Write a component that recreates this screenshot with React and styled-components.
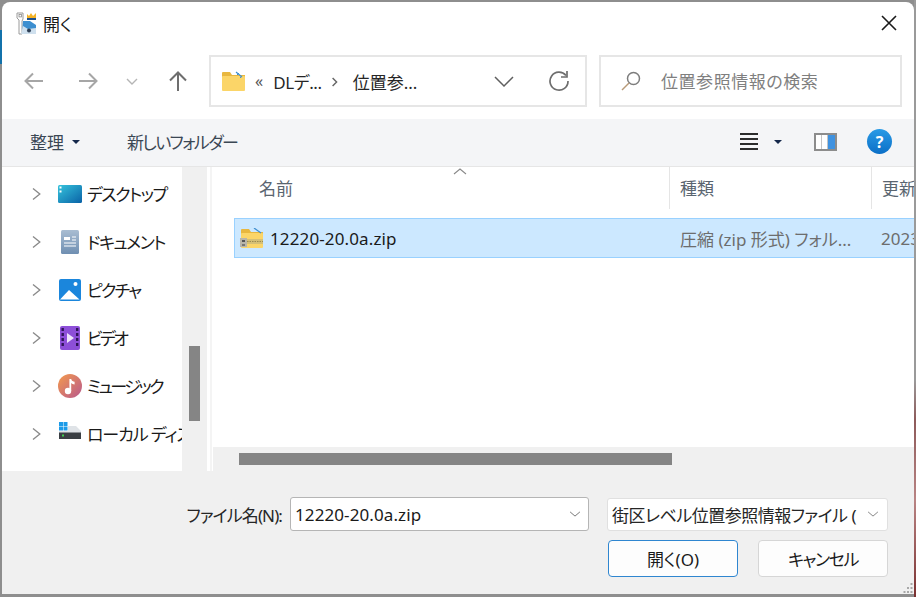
import React from "react";
import styled, { createGlobalStyle } from "styled-components";

const GlobalStyle = createGlobalStyle`
  html, body {
    margin: 0;
    padding: 0;
    width: 916px;
    height: 597px;
    overflow: hidden;
  }
  body {
    font-family: "Noto Sans", "Noto Sans CJK JP", sans-serif;
    font-feature-settings: "palt";
    font-size: 17px;
  }
  * { box-sizing: border-box; }
  svg { flex: none; }
`;

const navItems = [
  { name: "デスクトップ", icon: <DesktopIcon />, squeeze: 1.5 },
  { name: "ドキュメント", icon: <DocumentIcon />, squeeze: 1.5 },
  { name: "ピクチャ", icon: <PictureIcon />, squeeze: 1.75 },
  { name: "ビデオ", icon: <VideoIcon />, squeeze: 2.6 },
  { name: "ミュージック", icon: <MusicIcon />, squeeze: 2.5 },
  { name: "ローカル ディスク (C:)", icon: <DriveIcon />, squeeze: 1.1 },
];

function Line({ d, color = "#8a8a8a", width = 2, size = 20 }) {
  return (
    <svg width={size} height={size} viewBox="0 0 20 20" fill="none" stroke={color} strokeWidth={width}>
      <path d={d} />
    </svg>
  );
}

function DesktopIcon() {
  return (
    <svg width="24" height="18" viewBox="0 0 24 18">
      <defs>
        <linearGradient id="desk" x1="0" y1="0" x2="1" y2="1">
          <stop offset="0" stopColor="#35c3dc" />
          <stop offset="1" stopColor="#0a62a6" />
        </linearGradient>
      </defs>
      <rect width="24" height="18" rx="1.5" fill="url(#desk)" />
      <rect x="1.5" y="1.5" width="2" height="2" fill="#fff" />
      <rect x="1.5" y="5.5" width="2" height="2" fill="#fff" />
    </svg>
  );
}

function DocumentIcon() {
  return (
    <svg width="18" height="24" viewBox="0 0 18 24">
      <defs>
        <linearGradient id="doc" x1="0" y1="0" x2="0" y2="1">
          <stop offset="0" stopColor="#a9bdd2" />
          <stop offset="1" stopColor="#6f8fb2" />
        </linearGradient>
      </defs>
      <rect width="18" height="24" rx="1.5" fill="url(#doc)" />
      <path d="M3 7h6v3H3z" fill="#fff" />
      <path d="M11 7h4M11 10h4M3 13h12M3 16h12" stroke="#fff" strokeWidth="1.2" />
    </svg>
  );
}

function PictureIcon() {
  return (
    <svg width="22" height="22" viewBox="0 0 22 22">
      <rect width="22" height="22" rx="2" fill="#1b86dc" />
      <circle cx="16.5" cy="5" r="2" fill="#fff" />
      <path d="M1 20.5 10 11l10.5 9.5z" fill="#fff" />
    </svg>
  );
}

function VideoIcon() {
  return (
    <svg width="20" height="24" viewBox="0 0 20 24">
      <rect width="20" height="24" rx="2" fill="#8d4fd8" />
      <g fill="#2f1458">
        <rect x="1.5" y="2" width="2.4" height="3" />
        <rect x="1.5" y="7" width="2.4" height="3" />
        <rect x="1.5" y="12" width="2.4" height="3" />
        <rect x="1.5" y="17" width="2.4" height="3" />
        <rect x="16" y="2" width="2.4" height="3" />
        <rect x="16" y="7" width="2.4" height="3" />
        <rect x="16" y="12" width="2.4" height="3" />
        <rect x="16" y="17" width="2.4" height="3" />
      </g>
      <path d="M7 7l7 5-7 5z" fill="#eee4fb" />
    </svg>
  );
}

function MusicIcon() {
  return (
    <svg width="24" height="24" viewBox="0 0 24 24">
      <defs>
        <linearGradient id="music" x1="0" y1="0" x2="1" y2="1">
          <stop offset="0" stopColor="#f49a4c" />
          <stop offset="1" stopColor="#b8598e" />
        </linearGradient>
      </defs>
      <circle cx="12" cy="12" r="12" fill="url(#music)" />
      <circle cx="10" cy="17" r="3.2" fill="#fff" />
      <path d="M11.4 17V5h1.8c.3 2 2 2.6 3.4 2.8v2.6c-1.5 0-2.7-.5-3.4-1.3V17z" fill="#fff" />
    </svg>
  );
}

function DriveIcon() {
  return (
    <svg width="24" height="24" viewBox="0 0 24 24">
      <g fill="#1c9be8">
        <rect x="1" y="0" width="4" height="4" />
        <rect x="5.5" y="0" width="4" height="4" />
        <rect x="1" y="4.5" width="4" height="4" />
        <rect x="5.5" y="4.5" width="4" height="4" />
      </g>
      <path d="M10 4h8l5 5v2H1V9h9z" fill="#dfe3e7" />
      <rect x="1" y="10.5" width="22" height="6.5" fill="#3a3f44" />
      <rect x="4" y="12.5" width="2" height="2" fill="#3fd04f" />
    </svg>
  );
}

function FolderIcon() {
  return (
    <svg width="23" height="20" viewBox="0 0 23 20">
      <path d="M0 2a1 1 0 0 1 1-1h7l2 3h13v3H0z" fill="#e8b73f" />
      <rect x="0" y="5" width="23" height="15" rx="1" fill="#fbd568" />
      <path d="M14 1l6 5" stroke="#3f8fcf" strokeWidth="1.2" />
      <path d="M15 4l2-2M18 7l2-2" stroke="#3f8fcf" strokeWidth="1" />
    </svg>
  );
}

function ZipIcon() {
  return (
    <svg width="24" height="20" viewBox="0 0 24 20">
      <path d="M1 2a1 1 0 0 1 1-1h7l2 3h12v3H1z" fill="#e8b73f" />
      <rect x="1" y="5" width="22" height="15" rx="1" fill="#fbd568" />
      <path d="M14 0l7 5" stroke="#3f8fcf" strokeWidth="1.2" />
      <rect x="6" y="11" width="17" height="5" fill="#d6c074" />
      <path d="M7 13.5h16" stroke="#9a8a50" strokeWidth="1" strokeDasharray="1.5 1" />
      <rect x="0" y="10" width="7" height="9" fill="#b9b5a8" />
      <rect x="2" y="12" width="3" height="2" fill="#555" />
      <rect x="2" y="16" width="3" height="2" fill="#777" />
    </svg>
  );
}

function AppIcon() {
  return (
    <svg width="24" height="24" viewBox="0 0 24 24">
      <path d="M3 1h6v6l-1 2v13H5V8L3 6z" fill="#fff" stroke="#9a9a9a" strokeWidth="1" />
      <rect x="5" y="2.5" width="2.4" height="2.4" fill="none" stroke="#8a8a8a" strokeWidth=".8" />
      <path d="M9 9l7 0 6 4v9H8z" fill="#3d8fd0" />
      <path d="M7 22l2-8 5 3 8-1v6z" fill="#cfe0ee" />
      <circle cx="15" cy="18.5" r="2" fill="#2d3f55" />
      <path d="M13 2l2 2 2-3 2 3 3-3v6h-9z" fill="#f4b226" />
      <path d="M13 6h9v2h-9z" fill="#1d4f8c" />
    </svg>
  );
}

export default function App() {
  return (
    <Page>
      <GlobalStyle />
      <Dialog>
        <TitleBar>
          <TitleLeft>
            <AppIcon />
            <TitleText>開く</TitleText>
          </TitleLeft>
          <CloseIcon>
            <Line d="M3 3l14 14M17 3 3 17" color="#1a1a1a" width={1.6} />
          </CloseIcon>
        </TitleBar>

        <NavBar>
          <NavButtons>
            <NavButton $w={54}><Line d="M19 10H1.5M9 2.5 1.5 10 9 17.5" color="#a6a6a6" /></NavButton>
            <NavButton $w={44}><Line d="M1 10h17.5M11 2.5l7.5 7.5-7.5 7.5" color="#a6a6a6" /></NavButton>
            <NavButton $w={46}><Line d="M5 8l5 5 5-5" color="#b5b5b5" width={1.4} /></NavButton>
            <NavButton $w={40}><Line d="M10 20V1.5M2 9.5l8-8 8 8" color="#6e6e6e" /></NavButton>
          </NavButtons>
          <AddressBox>
            <FolderIcon />
            <Crumbs>
              <CrumbSmall>«</CrumbSmall>
              <Crumb $squeeze>DLデ...</Crumb>
              <CrumbSep><Line d="M7 5l5 5-5 5" color="#666" width={1.8} size={16} /></CrumbSep>
              <Crumb>位置参...</Crumb>
            </Crumbs>
            <AddressTools>
              <Line d="M1 6l9 9 9-9" color="#5f5f5f" width={1.5} />
              <svg width="22" height="22" viewBox="0 0 22 22" fill="none" stroke="#6e6e6e" strokeWidth="1.7">
                <path d="M18 5.5A9 9 0 1 0 20 11" />
                <path d="M19 1v6h-6" />
              </svg>
            </AddressTools>
          </AddressBox>
          <SearchBox>
            <svg width="20" height="20" viewBox="0 0 20 20" fill="none" strokeWidth="1.5">
              <circle cx="12.5" cy="7.5" r="6" stroke="#7d7d7d" />
              <path d="M8 12 1 19" stroke="#b89a78" />
            </svg>
            <SearchText>位置参照情報の検索</SearchText>
          </SearchBox>
        </NavBar>

        <Toolbar>
          <ToolLeft>
            <ToolButton>整理<Caret /></ToolButton>
            <ToolButton $squeeze>新しいフォルダー</ToolButton>
          </ToolLeft>
          <ToolRight>
            <ViewButton>
              <Burger><i /><i /><i /><i /></Burger>
              <Caret />
            </ViewButton>
            <PaneIcon><PaneStripe /><PaneStripe /><PaneFill /></PaneIcon>
            <HelpIcon>?</HelpIcon>
          </ToolRight>
        </Toolbar>

        <Main>
          <Sidebar>
            {navItems.map((item) => (
              <NavRow key={item.name}>
                <Line d="M5 3l8.5 7-8.5 7" color="#8a8a8a" width={1.7} size={16} />
                <NavIconSlot>{item.icon}</NavIconSlot>
                <NavLabel $squeeze={item.squeeze}>{item.name}</NavLabel>
              </NavRow>
            ))}
          </Sidebar>
          <VTrack>
            <VThumb />
          </VTrack>
          <Splitter />
          <FilePane>
            <FileHeader>
              <SortCaret>
                <svg width="14" height="7" viewBox="0 0 14 7" fill="none" stroke="#8a8a8a" strokeWidth="1.1">
                  <path d="M1 6l6-5 6 5" />
                </svg>
              </SortCaret>
              <HeadCell $w={457} $pad={46}>名前</HeadCell>
              <HeadCell $w={202} $pad={10}>種類</HeadCell>
              <HeadCell $pad={10}>更新日時</HeadCell>
            </FileHeader>
            <FileList>
              <FileRow>
                <NameCell>
                  <ZipIcon />
                  <FileName>12220-20.0a.zip</FileName>
                </NameCell>
                <TypeCell>圧縮 (zip 形式) フォル...</TypeCell>
                <DateCell>2023/</DateCell>
              </FileRow>
            </FileList>
            <HTrack>
              <HThumb />
            </HTrack>
          </FilePane>
        </Main>

        <Footer>
          <FooterRow>
            <FieldLabel>ファイル名(N):</FieldLabel>
            <FileInput>
              <InputValue>12220-20.0a.zip</InputValue>
              <Line d="M3 7l7 6 7-6" color="#6a6a6a" width={1.3} size={14} />
            </FileInput>
            <FileType>
              <TypeValue>街区レベル位置参照情報ファイル (</TypeValue>
              <TypeArrow><Line d="M3 7l7 6 7-6" color="#7a7a7a" width={1.3} size={14} /></TypeArrow>
            </FileType>
          </FooterRow>
          <ButtonRow>
            <DialogButton $primary>開く(O)</DialogButton>
            <DialogButton $squeeze>キャンセル</DialogButton>
          </ButtonRow>
          <Grip>
            <svg width="10" height="10" viewBox="0 0 10 10" fill="#a8a8a8">
              <rect x="7.5" y="0" width="2" height="2" />
              <rect x="4" y="4" width="2" height="2" />
              <rect x="7.5" y="4" width="2" height="2" />
              <rect x="0.5" y="8" width="2" height="2" />
              <rect x="4" y="8" width="2" height="2" />
              <rect x="7.5" y="8" width="2" height="2" />
            </svg>
          </Grip>
        </Footer>
      </Dialog>
    </Page>
  );
}

const Page = styled.div`
  width: 916px;
  height: 597px;
  padding: 2px 2px 3px 2px;
  background:
    linear-gradient(to bottom, transparent 30px, #1372ab 30px, #1372ab 64px, transparent 64px) left / 2px 100% no-repeat,
    linear-gradient(to bottom, #9a9a9a 0, #9a9a9a 380px, #8d5a5a 420px, #b98484 500px, #7a3030 597px) right / 2px 100% no-repeat,
    #8e8e8e;
`;

const Dialog = styled.div`
  width: 912px;
  height: 592px;
  display: flex;
  flex-direction: column;
  background: #fff;
  border-radius: 8px 8px 0 0;
  overflow: hidden;
`;

const TitleBar = styled.div`
  height: 44px;
  flex: none;
  display: flex;
  align-items: center;
  justify-content: space-between;
  padding: 0 15px 0 12px;
`;

const TitleLeft = styled.div`
  display: flex;
  align-items: center;
  gap: 5px;
`;

const TitleText = styled.span`
  margin-bottom: 2px;
  color: #1a1a1a;
`;

const CloseIcon = styled.div`
  display: flex;
  margin-bottom: 3px;
`;

const NavBar = styled.div`
  height: 73px;
  flex: none;
  display: flex;
  align-items: flex-start;
  padding: 9px 12px 0 14px;
`;

const NavButtons = styled.div`
  width: 193px;
  height: 52px;
  flex: none;
  display: flex;
  align-items: center;
`;

const NavButton = styled.div`
  width: ${(p) => p.$w}px;
  flex: none;
  display: flex;
  padding-left: 8px;
`;

const AddressBox = styled.div`
  width: 378px;
  height: 52px;
  flex: none;
  display: flex;
  align-items: center;
  padding: 0 15px 0 11px;
  border: 2px solid #e6e6e6;
`;

const Crumbs = styled.div`
  flex: 1;
  display: flex;
  align-items: center;
  gap: 10px;
  margin-left: 10px;
  color: #262626;
`;

const CrumbSmall = styled.span`
  font-size: 16px;
  color: #555;
`;

const Crumb = styled.span`
  white-space: nowrap;
  letter-spacing: ${(p) => (p.$squeeze ? "-0.4px" : "0")};
`;

const CrumbSep = styled.span`
  display: flex;
  margin: 2px 0 0 -5px;
`;

const AddressTools = styled.div`
  display: flex;
  align-items: center;
  gap: 34px;
`;

const SearchBox = styled.div`
  width: 303px;
  height: 52px;
  flex: none;
  margin-left: 12px;
  display: flex;
  align-items: center;
  gap: 20px;
  padding-left: 20px;
  border: 2px solid #e6e6e6;
`;

const SearchText = styled.span`
  margin-bottom: 1px;
  color: #7f7f7f;
  letter-spacing: 0.55px;
`;

const Toolbar = styled.div`
  height: 48px;
  flex: none;
  display: flex;
  align-items: center;
  justify-content: space-between;
  padding: 0 22px 2px 28px;
  background: #f4f5f7;
  border-bottom: 1px solid #e6e6e6;
`;

const ToolLeft = styled.div`
  display: flex;
  align-items: center;
  gap: 47px;
`;

const ToolRight = styled.div`
  display: flex;
  align-items: center;
`;

const ToolButton = styled.div`
  display: flex;
  align-items: center;
  gap: 8px;
  color: #3b4754;
  letter-spacing: ${(p) => (p.$squeeze ? "-1.6px" : "0")};
`;

const Caret = styled.span`
  width: 0;
  height: 0;
  border-left: 4px solid transparent;
  border-right: 4px solid transparent;
  border-top: 4px solid #14284b;
`;

const ViewButton = styled.div`
  display: flex;
  align-items: center;
  gap: 16px;
`;

const Burger = styled.div`
  width: 18px;
  height: 17px;
  display: flex;
  flex-direction: column;
  justify-content: space-between;

  i {
    display: block;
    height: 1.5px;
    background: #2b2b2b;
  }
`;

const PaneIcon = styled.div`
  width: 23px;
  height: 18px;
  margin-left: 32px;
  display: flex;
  border: 2px solid #8c8c8c;
  background: #fff;
`;

const PaneStripe = styled.span`
  width: 6px;
  border-right: 1px solid #c4c4c4;
`;

const PaneFill = styled.span`
  flex: 1;
  background: #3f92e0;
`;

const HelpIcon = styled.div`
  width: 25px;
  height: 25px;
  margin-left: 30px;
  border-radius: 50%;
  display: flex;
  align-items: center;
  justify-content: center;
  background: linear-gradient(#2a9be6, #0b6fc7);
  color: #fff;
  font-size: 16px;
  font-weight: 700;
`;

const Main = styled.div`
  height: 304px;
  flex: none;
  display: flex;
  background: #fff;
`;

const Sidebar = styled.div`
  width: 180px;
  flex: none;
  overflow: hidden;
  padding-top: 3px;
`;

const NavRow = styled.div`
  height: 48px;
  display: flex;
  align-items: center;
  padding-left: 27px;
  white-space: nowrap;
`;

const NavIconSlot = styled.div`
  width: 24px;
  margin-left: 13px;
  flex: none;
  display: flex;
  justify-content: center;
`;

const NavLabel = styled.span`
  margin: 0 0 2px 5px;
  color: #1a1a1a;
  letter-spacing: ${(p) => -p.$squeeze}px;
`;

const VTrack = styled.div`
  width: 25px;
  flex: none;
  padding: 179px 7px 0;
  background: #f0f0f0;
`;

const VThumb = styled.div`
  height: 75px;
  background: #858585;
`;

const Splitter = styled.div`
  width: 6px;
  flex: none;
  border-left: 3px solid #fff;
  background: #f4f4f4;
  border-right: 1px solid #fff;
`;

const FilePane = styled.div`
  flex: 1;
  min-width: 0;
  display: flex;
  flex-direction: column;
  overflow: hidden;
`;

const FileHeader = styled.div`
  position: relative;
  height: 42px;
  flex: none;
  display: flex;
`;

const SortCaret = styled.div`
  position: absolute;
  left: 240px;
  top: 1px;
  display: flex;
`;

const HeadCell = styled.div`
  flex: ${(p) => (p.$w ? `0 0 ${p.$w}px` : "1")};
  display: flex;
  align-items: center;
  padding: 0 0 2px ${(p) => p.$pad}px;
  color: #5a6570;
  white-space: nowrap;
  border-right: ${(p) => (p.$w ? "1px solid #e5e5e5" : "none")};
`;

const FileList = styled.div`
  flex: 1;
  padding: 9px 0 0 21px;
`;

const FileRow = styled.div`
  height: 40px;
  display: flex;
  align-items: center;
  background: #cce8ff;
  border: 1px solid #99d1ff;
  border-right: none;
  white-space: nowrap;
  overflow: hidden;
`;

const NameCell = styled.div`
  width: 434px;
  flex: none;
  display: flex;
  align-items: center;
  gap: 6px;
  padding-left: 5px;
`;

const FileName = styled.span`
  color: #1a1a1a;
  letter-spacing: 0.13px;
`;

const TypeCell = styled.div`
  width: 202px;
  flex: none;
  padding-left: 11px;
  color: #6d6d6d;
`;

const DateCell = styled.div`
  padding-left: 10px;
  color: #6d6d6d;
`;

const HTrack = styled.div`
  height: 24px;
  flex: none;
  padding: 6px 0 6px 26px;
  background: #f0f0f0;
`;

const HThumb = styled.div`
  width: 433px;
  height: 12px;
  background: #858585;
`;

const Footer = styled.div`
  position: relative;
  flex: 1;
  display: flex;
  flex-direction: column;
  gap: 9px;
  padding: 26px 26px 0 0;
  background: #f0f0f0;
`;

const FooterRow = styled.div`
  display: flex;
  justify-content: flex-end;
  align-items: center;
  height: 34px;
`;

const FieldLabel = styled.span`
  margin-right: 8px;
  color: #262626;
  letter-spacing: -0.9px;
`;

const FileInput = styled.div`
  width: 299px;
  height: 34px;
  display: flex;
  align-items: center;
  justify-content: space-between;
  padding: 0 6px 0 4px;
  background: #fff;
  border: 1px solid #b5b5b5;
  border-radius: 3px;
`;

const InputValue = styled.span`
  color: #1a1a1a;
  letter-spacing: 0.1px;
`;

const FileType = styled.div`
  width: 281px;
  height: 33px;
  margin-left: 18px;
  display: flex;
  align-items: center;
  padding-left: 4px;
  background: #fff;
  border: 1px solid #e0e0e0;
  border-radius: 3px;
`;

const TypeValue = styled.span`
  flex: 1;
  min-width: 0;
  overflow: hidden;
  white-space: nowrap;
  color: #262626;
  letter-spacing: -0.5px;
`;

const TypeArrow = styled.span`
  width: 28px;
  flex: none;
  display: flex;
  justify-content: center;
`;

const ButtonRow = styled.div`
  display: flex;
  justify-content: flex-end;
  gap: 20px;
`;

const DialogButton = styled.div`
  width: 130px;
  height: 37px;
  display: flex;
  align-items: center;
  justify-content: center;
  color: #1a1a1a;
  background: #fdfdfd;
  letter-spacing: ${(p) => (p.$squeeze ? "-1.4px" : "0")};
  border: 1px solid ${(p) => (p.$primary ? "#2f86d0" : "#d6d6d6")};
  border-radius: 4px;
`;

const Grip = styled.div`
  position: absolute;
  right: 1px;
  bottom: 1px;
  display: flex;
`;
